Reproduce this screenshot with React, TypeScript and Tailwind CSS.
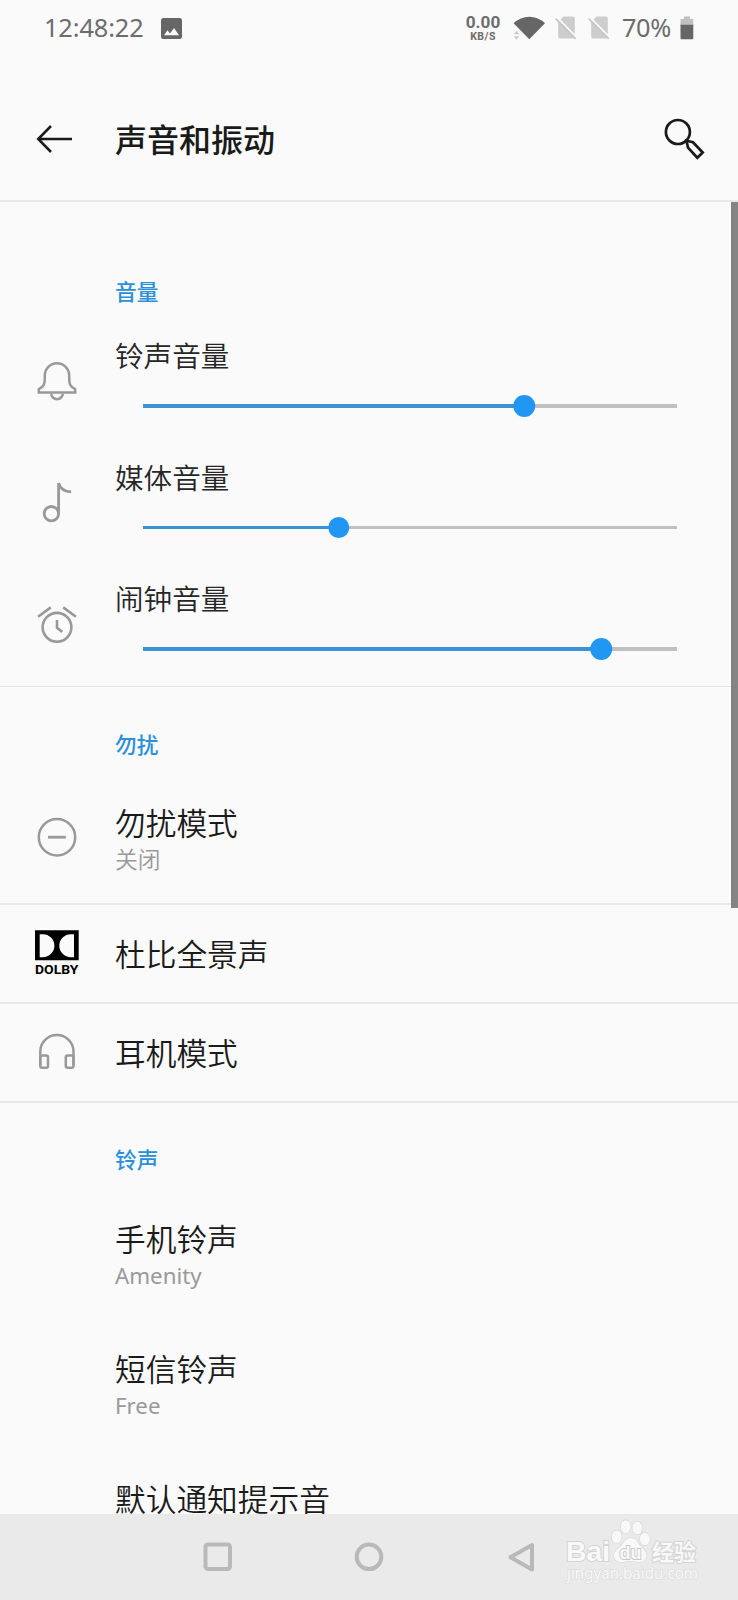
import type { ReactNode } from 'react'

interface Volume {
  label: string
  value: number
  icon: ReactNode
}

const iconProps = {
  width: 44,
  height: 44,
  viewBox: '0 0 44 44',
  fill: 'none',
  stroke: '#999',
  strokeWidth: 2.5,
}

const BellIcon = () => (
  <svg {...iconProps}>
    <path d="M3.8 32.4v-3.2C9 26.5 9.8 24 9.8 18v-2.6a12.2 12.2 0 0 1 24.4 0V18c0 6 .8 8.5 6 11.2v3.2Z" />
    <path d="M16.2 33.4a5.8 5.8 0 0 0 11.6 0" />
  </svg>
)

const NoteIcon = () => (
  <svg {...iconProps} strokeWidth={2.8}>
    <circle cx="16.4" cy="32.7" r="7.2" />
    <path d="M23.6 32.7V2.1c1.5 5 6 8.6 12.6 8.8" />
  </svg>
)

const AlarmIcon = () => (
  <svg {...iconProps} strokeWidth={2.6}>
    <circle cx="22" cy="24.3" r="14.4" />
    <path d="M22 17.1v7.8l5.3 4M3.1 13.7l12.7-9.3M40.9 13.7 28.2 4.4" />
  </svg>
)

const MinusIcon = () => (
  <svg {...iconProps}>
    <circle cx="22" cy="20.2" r="18.2" />
    <path d="M13 20.2h17.8" strokeWidth="2.8" />
  </svg>
)

const DolbyIcon = () => (
  <svg width="44" height="48" viewBox="0 0 44 48">
    <path d="M0 .2h43.7v30H0z" fill="#000" />
    <path d="M4.7 4.2h3.2a11.5 11.5 0 0 1 0 23H4.7zM39 4.2h-3.2a11.5 11.5 0 0 0 0 23H39z" fill="#fafafa" />
    <text x="0" y="43.5" textLength="43.5" lengthAdjust="spacingAndGlyphs" className="font-[Roboto,sans-serif] text-[13px] font-bold" fill="#000">
      DOLBY
    </text>
  </svg>
)

const HeadphonesIcon = () => (
  <svg {...iconProps}>
    <path d="M5.3 34.5V20.5a16.6 16.6 0 0 1 33.2 0v14" />
    <rect x="5.3" y="24.5" width="7.7" height="12.2" rx="1.8" />
    <rect x="30.8" y="24.5" width="7.7" height="12.2" rx="1.8" />
  </svg>
)

const SimOffIcon = () => (
  <svg width="22" height="24" viewBox="0 0 22 24">
    <path d="M8.5.5H18a1.8 1.8 0 0 1 1.8 1.8v19A1.8 1.8 0 0 1 18 22.5H5a1.8 1.8 0 0 1-1.8-1.8V6z" fill="#cdcdcd" />
    <path d="M1.8 1.2 21.8 21.5" stroke="#fafafa" strokeWidth="1.8" />
    <path d="M.7 2.6 20.7 22.9" stroke="#c6c6c6" strokeWidth="1.7" />
  </svg>
)

const volumes: Volume[] = [
  { label: '铃声音量', value: 71.4, icon: <BellIcon /> },
  { label: '媒体音量', value: 36.7, icon: <NoteIcon /> },
  { label: '闹钟音量', value: 85.8, icon: <AlarmIcon /> },
]

function StatusBar() {
  return (
    <div className="flex h-14 shrink-0 items-center pl-[44px] text-[#6c6c6c]">
      <span className="w-[117px] text-[25.3px] leading-none tracking-[-0.1px]">12:48:22</span>
      <svg width="21" height="21" viewBox="0 0 21 21">
        <rect width="21" height="21" rx="2.5" fill="#666" />
        <path d="M3 17.3 6.5 12.3l2.5 3.2 4-5.5 5 7.3z" fill="#fafafa" />
      </svg>
      <div className="ml-[284px] flex w-[34px] flex-col items-center font-[Roboto,sans-serif] font-bold">
        <span className="text-[17.2px] leading-[15px]">0.00</span>
        <span className="mt-[2px] text-[10.5px] leading-[9px] tracking-[0.5px]">KB/S</span>
      </div>
      <svg className="ml-[13px]" width="33" height="24" viewBox="0 0 33 24">
        <path d="M.6 7.2a22.5 22.5 0 0 1 31.4 0L16.3 23.2z" fill="#666" />
        <path d="M.5 18.2h6L3.5 14.7zM.5 20.2h6l-3 3.5z" fill="#cdcdcd" />
      </svg>
      <div className="ml-[9px] flex gap-[11px]">
        <SimOffIcon />
        <SimOffIcon />
      </div>
      <span className="ml-[12px] w-[51px] text-[25.3px] leading-none tracking-[-0.4px] whitespace-nowrap">70%</span>
      <svg className="ml-[7px]" width="14" height="24" viewBox="0 0 14 24">
        <path d="M4 .5h6V3h3.3v7H.5V3H4z" fill="#c0c0c0" />
        <path d="M.5 8.8h12.8v13.2a1.2 1.2 0 0 1-1.2 1.2H1.7a1.2 1.2 0 0 1-1.2-1.2z" fill="#666" />
      </svg>
    </div>
  )
}

function Header() {
  return (
    <header className="flex h-[146px] shrink-0 items-center border-b-2 border-[#e8e8e8] pt-[22px] pr-[32px] pl-9">
      <svg width="38" height="30" viewBox="0 0 38 30" fill="none" stroke="#1a1a1a" strokeWidth="2.5">
        <path d="M36 15H2.2M15 2 2.2 15 15 28" />
      </svg>
      <h1 className="ml-[41px] flex-1 pt-[2px] text-[32px] font-medium text-[#1a1a1a]">声音和振动</h1>
      <svg width="42" height="42" viewBox="0 0 42 42" fill="none" stroke="#1a1a1a" strokeWidth="2.7">
        <circle cx="13.9" cy="14" r="12" />
        <path d="M22.5 22.8 29 24.3l9.7 10.2-5.4 5.2L24 29.7z" />
      </svg>
    </header>
  )
}

function Category({ children }: { children: string }) {
  return <h2 className="flex h-[60px] items-center pt-[3px] pl-[115px] text-[21.7px] font-medium text-[#2b90d9]">{children}</h2>
}

function VolumeRow({ label, value, icon }: Volume) {
  return (
    <div className="flex h-[121.67px] items-center pl-[35px]">
      <div className="w-20 shrink-0">{icon}</div>
      <div className="h-full flex-1 pt-[13px] pr-[61px]">
        <div className="text-[28.6px] leading-[44px] font-[350] text-[#262626]">{label}</div>
        <div className="relative mt-[16.8px] ml-7 flex h-[22px] items-center">
          <div className="h-[3.5px] w-full bg-[#c0c0c0]">
            <div className="h-full bg-[#3b93d3]" style={{ width: `${value}%` }} />
          </div>
          <div className="absolute size-[21.5px] -translate-x-1/2 rounded-full bg-[#2196f3]" style={{ left: `${value}%` }} />
        </div>
      </div>
    </div>
  )
}

function Item({ title, summary, icon }: { title: string; summary?: ReactNode; icon?: ReactNode }) {
  return (
    <div className="flex h-full items-center pt-[2px] pl-[35px]">
      <div className="w-20 shrink-0">{icon}</div>
      <div>
        <div className="text-[30.7px] leading-[40px] font-[350] text-[#1a1a1a]">{title}</div>
        {summary && <div className="text-[22.8px] leading-[33px] font-[350] text-[#999]">{summary}</div>}
      </div>
    </div>
  )
}

// Ringtone names are Latin text and sit a touch heavier than the CJK summaries
function ToneName({ children }: { children: string }) {
  return <span className="text-[22.3px] font-normal">{children}</span>
}

function NavBar() {
  return (
    <nav className="relative flex h-[86px] shrink-0 items-center bg-[#eaeaea] pl-[203px]">
      <svg width="332" height="30" viewBox="0 0 332 30" fill="none" stroke="#b9b9b9" strokeWidth="4">
        <rect x="2.5" y="2.5" width="24.5" height="24.5" rx="2.5" />
        <circle cx="166" cy="14.8" r="12.3" />
        <path d="M329 3v24.5L307.5 15.2z" strokeLinejoin="round" />
      </svg>
      <Watermark />
    </nav>
  )
}

function Watermark() {
  return (
    <svg
      className="absolute top-[2px] left-[562px]"
      width="142"
      height="72"
      viewBox="0 0 142 72"
      fill="#f8f8f8"
      stroke="#d4d4d4"
      strokeWidth="1.2"
      paintOrder="stroke"
    >
      <text x="4" y="44.5" textLength="44" lengthAdjust="spacingAndGlyphs" strokeWidth="2" className="font-['Liberation_Sans',sans-serif] text-[28px] font-bold">
        Bai
      </text>
      <ellipse cx="54.7" cy="20.7" rx="5" ry="6.3" />
      <ellipse cx="63.7" cy="10.7" rx="5" ry="6.5" />
      <ellipse cx="75.3" cy="12" rx="5" ry="6.5" />
      <ellipse cx="83" cy="23" rx="5" ry="6.3" />
      <path d="M69 22c-6 0-7 5-11 8.5s-7 6-6 10.5c1.3 5 6 5.5 10.5 4.700s8.500-.6 12.500 0 8.500.3 9.500-4.700c.8-4.500-2-7-5.500-10.500S75 22 69 22Z" />
      <text x="57.5" y="42.5" textLength="22" lengthAdjust="spacingAndGlyphs" fill="#f8f8f8" strokeWidth="1.8" stroke="#c8c8c8" className="font-['Liberation_Sans',sans-serif] text-[18.5px] font-bold">
        du
      </text>
      <text x="90" y="43.5" textLength="44" strokeWidth="2" className="text-[22px] font-bold">
        经验
      </text>
      <text x="5" y="62.5" textLength="131" lengthAdjust="spacingAndGlyphs" strokeWidth="1.2" stroke="#dadada" className="text-[15.5px]">
        jingyan.baidu.com
      </text>
    </svg>
  )
}

export default function App() {
  return (
    <div className="relative flex h-[1600px] w-[738px] flex-col overflow-hidden bg-[#fafafa] font-['Noto_Sans','Noto_Sans_CJK_SC',sans-serif]">
      <StatusBar />
      <Header />

      <main className="min-h-0 flex-1 overflow-hidden">
        <section className="border-b border-[#e4e4e4] pt-[59px]">
          <Category>音量</Category>
          {volumes.map((v) => (
            <VolumeRow key={v.label} {...v} />
          ))}
        </section>

        <section className="border-b-2 border-[#e8e8e8] pt-[27px]">
          <Category>勿扰</Category>
          <div className="h-[129px]">
            <Item title="勿扰模式" summary="关闭" icon={<MinusIcon />} />
          </div>
        </section>

        <div className="h-[99px] border-b-2 border-[#e8e8e8]">
          <Item title="杜比全景声" icon={<DolbyIcon />} />
        </div>
        <div className="h-[99px] border-b-2 border-[#e8e8e8]">
          <Item title="耳机模式" icon={<HeadphonesIcon />} />
        </div>

        <section className="pt-[26px]">
          <Category>铃声</Category>
          <div className="h-[130.4px]">
            <Item title="手机铃声" summary={<ToneName>Amenity</ToneName>} />
          </div>
          <div className="h-[130.4px]">
            <Item title="短信铃声" summary={<ToneName>Free</ToneName>} />
          </div>
          <div className="h-[97px]">
            <Item title="默认通知提示音" />
          </div>
        </section>
      </main>

      {/* Scrollbar thumb */}
      <div className="absolute top-[202px] right-0 h-[706px] w-[7px] bg-[#848484]" />

      <NavBar />
    </div>
  )
}
